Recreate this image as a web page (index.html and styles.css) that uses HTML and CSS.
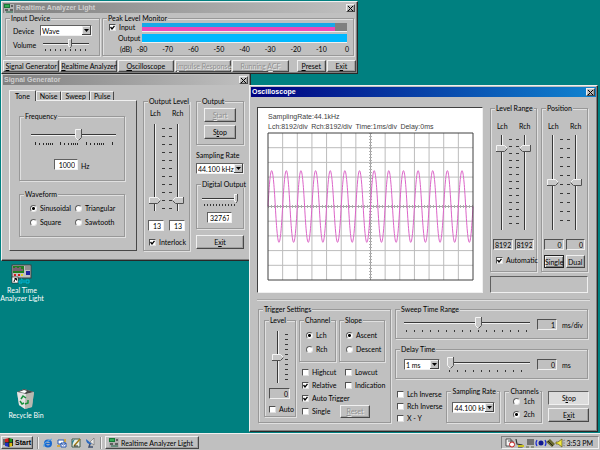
FILE: index.html
```html
<!DOCTYPE html>
<html lang="en">
<head>
<meta charset="utf-8">
<title>Realtime Analyzer Light</title>
<link rel="stylesheet" href="styles.css">
</head>
<body>
<main class="desktop">

  <a class="shortcut shortcut-app" href="#analyzer">
    <svg width="22" height="20" viewBox="0 0 22 20" aria-hidden="true">
      <rect x="1" y="1" width="19" height="13" fill="#c0c0c0" stroke="#404040"/>
      <rect x="2" y="2" width="11" height="7" fill="#208020"/>
      <path d="M3 7V4M5 7V3M7 7V4M9 7V3M11 7V5" stroke="#d040c0"/>
      <path d="M14 3h5M14 5h5" stroke="#606060"/>
      <rect x="15" y="7" width="4" height="4" fill="#2020a0"/>
      <path d="M3 11h2M7 11h2" stroke="#d02020" stroke-width="2"/><path d="M10 11h2" stroke="#e0d020" stroke-width="2"/>
      <rect x="1" y="13" width="6" height="6" fill="#fff" stroke="#222" stroke-width=".6"/>
      <path d="M3 18q0-3 2-3M3.500 14.500h2v2" fill="none" stroke="#000"/>
      <path d="M10 15h1v4h-3v-2h2M13 16v3M15 19v-3h3v3h-3" fill="none" stroke="#00b8d8"/>
    </svg>
    <span>Real Time<br>Analyzer Light</span>
  </a>
  <a class="shortcut shortcut-bin" href="#bin">
    <svg width="20" height="20" viewBox="0 0 20 20" aria-hidden="true">
      <path d="M1 3l7-3 10 3-2 15-7 2-6-4z" fill="#a8a8a8"/>
      <path d="M1 3l9 2 8-2-10-3z" fill="#484848"/>
      <path d="M1 3l9 2-1 15-6-4z" fill="#e4e4e4"/>
      <path d="M10 5l8-2-2 15-7 2z" fill="#b8b8b0"/>
      <path d="M3 3l6 1 2-2-3-1z" fill="#fff"/>
      <path d="M5 10l2-3 3 2M4 12l2 3 2-1M9 15l3-1v-3" fill="none" stroke="#189038" stroke-width="1.500"/>
    </svg>
    <span>Recycle Bin</span>
  </a>

  <section class="window analyzer" id="analyzer">
    <header class="title">
      <svg width="10" height="9" viewBox="0 0 10 9" aria-hidden="true"><rect width="10" height="9" fill="#b0b0b0"/><rect width="6" height="4" fill="#187838"/><path d="M1 6h3M6 6h3M7 2h2" stroke="#111"/><path d="M1 2h4" stroke="#50e070"/><path d="M2 8h7" stroke="#206848"/></svg>
      <h1>Realtime Analyzer Light</h1>
      <button class="close" aria-label="Close"><svg width="5" height="5" viewBox="0 0 5 5"><path d="M0 0l5 5M5 0L0 5"/></svg></button>
    </header>
    <div class="meters">
      <fieldset class="input-device">
        <legend>Input Device</legend>
        <label for="device">Device</label>
        <select id="device"><option>Wave</option></select>
        <label for="volume">Volume</label>
        <div class="slide">
          <input type="range" class="h small" id="volume" value="60">
          <i class="ticks t4"></i>
        </div>
      </fieldset>
      <fieldset class="peak">
        <legend>Peak Level Monitor</legend>
        <label class="check"><input type="checkbox" checked>Input</label>
        <div class="bar"><i class="level in" style="width:94%"></i></div>
        <span class="out-label">Output</span>
        <div class="bar"><i class="level out" style="width:100%"></i></div>
        <span class="out-label db">(dB)</span>
        <div class="scale"><span>-80</span><span>-70</span><span>-60</span><span>-50</span><span>-40</span><span>-30</span><span>-20</span><span>-10</span><span>0</span></div>
      </fieldset>
    </div>
    <nav class="tools">
      <button class="wide"><u>S</u>ignal Generator</button>
      <button class="wide"><u>R</u>ealtime Analyzer</button>
      <button class="wide"><u>O</u>scilloscope</button>
      <button class="wide" disabled><u>I</u>mpulse Response</button>
      <button class="wide" disabled>Running <u>A</u>CF</button>
      <button class="apart"><u>P</u>reset</button>
      <button>E<u>x</u>it</button>
    </nav>
  </section>

  <section class="window generator">
    <header class="title">
      <h2>Signal Generator</h2>
      <button class="close" aria-label="Close"><svg width="5" height="5" viewBox="0 0 5 5"><path d="M0 0l5 5M5 0L0 5"/></svg></button>
    </header>
    <div class="gen-body">
      <div class="tabbed">
        <div class="tabs" role="tablist">
          <button role="tab" aria-selected="true">Tone</button>
          <button role="tab">Noise</button>
          <button role="tab">Sweep</button>
          <button role="tab">Pulse</button>
        </div>
        <div class="panel" role="tabpanel">
          <fieldset class="frequency">
            <legend>Frequency</legend>
            <div class="slide">
              <input type="range" class="h" aria-label="Frequency" value="56">
              <svg class="log" width="80" height="3" viewBox="0 0 80 3" aria-hidden="true"><path d="M1.500 0v3M5.500 1v2M9.500 1v2M12.500 1v2M14.500 1v2M16.500 1v2M18.500 1v2M26.500 0v3M30.500 1v2M34.500 1v2M37.500 1v2M39.500 1v2M41.500 1v2M43.500 1v2M52.500 0v3M56.500 1v2M60.500 1v2M63.500 1v2M65.500 1v2M67.500 1v2M69.500 1v2M78.500 0v3"/></svg>
            </div>
            <div class="hertz"><input type="text" id="hz" value="1000"><label for="hz">Hz</label></div>
          </fieldset>
          <fieldset class="waveform">
            <legend>Waveform</legend>
            <label class="radio"><input type="radio" name="wave" checked>Sinusoidal</label>
            <label class="radio"><input type="radio" name="wave">Triangular</label>
            <label class="radio"><input type="radio" name="wave">Square</label>
            <label class="radio"><input type="radio" name="wave">Sawtooth</label>
          </fieldset>
        </div>
      </div>
      <fieldset class="levels output-level">
        <legend>Output Level</legend>
        <div class="heads"><label for="ol">Lch</label><label for="or">Rch</label></div>
        <div class="pair">
          <input type="range" class="v" id="ol" value="9"><i class="ticks v8"></i>
          <i class="ticks v8"></i><input type="range" class="v left" id="or" value="9">
        </div>
        <div class="values"><input type="text" aria-label="Lch level" value="13"><input type="text" aria-label="Rch level" value="13"></div>
        <label class="check"><input type="checkbox" checked>Interlock</label>
      </fieldset>
      <div class="gen-side">
        <fieldset class="output">
          <legend>Output</legend>
          <button disabled><u>S</u>tart</button>
          <button>S<u>t</u>op</button>
        </fieldset>
        <div class="rate">
          <label for="rate1">Sampling Rate</label>
          <select id="rate1"><option>44.100 kHz</option></select>
        </div>
        <fieldset class="digital">
          <legend>Digital Output</legend>
          <div class="slide">
            <input type="range" class="h small" aria-label="Digital output" value="100">
            <i class="ticks t2"></i>
          </div>
          <input type="text" aria-label="Digital output value" value="32767">
        </fieldset>
        <button class="tall">E<u>x</u>it</button>
      </div>
    </div>
  </section>

  <section class="window scope active">
    <header class="title">
      <h2>Oscilloscope</h2>
      <button class="close" aria-label="Close"><svg width="5" height="5" viewBox="0 0 5 5"><path d="M0 0l5 5M5 0L0 5"/></svg></button>
    </header>
    <div class="scope-top">
      <div class="display">
        <p>SamplingRate:44.1kHz</p>
        <p>Lch:8192/div&ensp;Rch:8192/div&ensp;Time:1ms/div&ensp;Delay:0ms</p>
        <svg class="trace" viewBox="0 0 280 200" preserveAspectRatio="none" role="img" aria-label="Waveform">
          <path class="grid" d="M20 0v200M40 0v200M60 0v200M80 0v200M100 0v200M120 0v200M160 0v200M180 0v200M200 0v200M220 0v200M240 0v200M260 0v200M0 20h280M0 40h280M0 60h280M0 80h280M0 120h280M0 140h280M0 160h280M0 180h280"/>
          <path class="axis" d="M140 0v200M0 100h280"/>
          <path class="marks-y" d="M140 0v200"/>
          <path class="marks-x" d="M0 100h280"/>
          <path class="wave" d="M0 100c3.600-65 6.400-65 10 0s6.400 65 10 0s6.400-65 10 0s6.400 65 10 0s6.400-65 10 0s6.400 65 10 0s6.400-65 10 0s6.400 65 10 0s6.400-65 10 0s6.400 65 10 0s6.400-65 10 0s6.400 65 10 0s6.400-65 10 0s6.400 65 10 0s6.400-65 10 0s6.400 65 10 0s6.400-65 10 0s6.400 65 10 0s6.400-65 10 0s6.400 65 10 0s6.400-65 10 0s6.400 65 10 0s6.400-65 10 0s6.400 65 10 0s6.400-65 10 0s6.400 65 10 0s6.400-65 10 0s6.400 65 10 0"/>
          <rect class="frame" x="0" y="0" width="280" height="200"/>
        </svg>
      </div>
      <div class="scope-side">
        <fieldset class="levels">
          <legend>Level Range</legend>
          <div class="heads"><label for="ll">Lch</label><label for="lr">Rch</label></div>
          <div class="pair">
            <input type="range" class="v" id="ll" value="89"><i class="ticks v7"></i>
            <i class="ticks v7"></i><input type="range" class="v left" id="lr" value="89">
          </div>
          <div class="values"><input type="text" class="gray" readonly aria-label="Lch range" value="8192"><input type="text" class="gray" readonly aria-label="Rch range" value="8192"></div>
          <label class="check"><input type="checkbox" checked>Automatic</label>
        </fieldset>
        <fieldset class="levels">
          <legend>Position</legend>
          <div class="heads"><label for="pl">Lch</label><label for="pr">Rch</label></div>
          <div class="pair">
            <input type="range" class="v" id="pl" value="50"><i class="ticks v9"></i>
            <i class="ticks v9"></i><input type="range" class="v left" id="pr" value="50">
          </div>
          <div class="values"><input type="text" class="gray" readonly aria-label="Lch position" value="0"><input type="text" class="gray" readonly aria-label="Rch position" value="0"></div>
          <div class="modes"><button class="chosen">Single</button><button>Dual</button></div>
        </fieldset>
        <div class="status"></div>
      </div>
    </div>
    <hr>
    <div class="scope-bottom">
      <fieldset class="trigger">
        <legend>Trigger Settings</legend>
        <fieldset class="trigger-level">
          <legend>Level</legend>
          <div class="single"><input type="range" class="v" aria-label="Trigger level" value="50"><i class="ticks v5"></i></div>
          <input type="text" class="gray" readonly aria-label="Trigger level value" value="0">
          <label class="check"><input type="checkbox">Auto</label>
        </fieldset>
        <div class="trigger-options">
          <fieldset class="choice">
            <legend>Channel</legend>
            <label class="radio"><input type="radio" name="ch" checked>Lch</label>
            <label class="radio"><input type="radio" name="ch">Rch</label>
          </fieldset>
          <fieldset class="choice">
            <legend>Slope</legend>
            <label class="radio"><input type="radio" name="slope" checked>Ascent</label>
            <label class="radio"><input type="radio" name="slope">Descent</label>
          </fieldset>
          <div class="flags">
            <label class="check"><input type="checkbox">Highcut</label>
            <label class="check"><input type="checkbox">Lowcut</label>
            <label class="check"><input type="checkbox" checked>Relative</label>
            <label class="check"><input type="checkbox">Indication</label>
            <label class="check both"><input type="checkbox" checked>Auto Trigger</label>
            <label class="check"><input type="checkbox">Single</label>
            <button disabled><u>R</u>eset</button>
          </div>
        </div>
      </fieldset>
      <div class="timing">
        <fieldset class="time">
          <legend>Sweep Time Range</legend>
          <div class="slide">
            <input type="range" class="h" aria-label="Sweep time range" value="60">
            <i class="ticks t8"></i>
          </div>
          <input type="text" class="gray" id="sweep" readonly value="1">
          <label for="sweep">ms/div</label>
        </fieldset>
        <fieldset class="time">
          <legend>Delay Time</legend>
          <select aria-label="Delay unit"><option>1 ms</option></select>
          <div class="slide">
            <input type="range" class="h" aria-label="Delay time" value="0">
            <i class="ticks t8"></i>
          </div>
          <input type="text" class="gray" id="delay" readonly value="0">
          <label for="delay">ms</label>
        </fieldset>
        <div class="finish">
          <div class="inverse">
            <label class="check"><input type="checkbox">Lch Inverse</label>
            <label class="check"><input type="checkbox">Rch Inverse</label>
            <label class="check"><input type="checkbox">X - Y</label>
          </div>
          <fieldset class="scope-rate">
            <legend>Sampling Rate</legend>
            <select aria-label="Sampling rate"><option>44.100 kHz</option></select>
          </fieldset>
          <fieldset class="channels">
            <legend>Channels</legend>
            <label class="radio"><input type="radio" name="chs">1ch</label>
            <label class="radio"><input type="radio" name="chs" checked>2ch</label>
          </fieldset>
          <div class="commands">
            <button class="pressed">S<u>t</u>op</button>
            <button>E<u>x</u>it</button>
          </div>
        </div>
      </div>
    </div>
  </section>
</main>

<footer class="taskbar">
  <button class="start">
    <svg width="10" height="9" viewBox="0 0 10 9" aria-hidden="true"><path d="M0 2h2M0 4h2M0 6h2" stroke="#111"/><path d="M2 1l4-1v4H2z" fill="#d02020"/><path d="M6 0l4 1v3H6z" fill="#189018"/><path d="M2 5h4v4L2 8z" fill="#2030c0"/><path d="M6 5h4v3l-4 1z" fill="#d8b810"/><path d="M6 0v9M2 4.500h8M9.500 1v7" stroke="#111" stroke-width=".8"/></svg>
    Start
  </button>
  <div class="quick">
    <a href="#" aria-label="Internet Explorer"><svg width="10" height="10" viewBox="0 0 10 10"><circle cx="5" cy="5.500" r="3" fill="none" stroke="#1868d0" stroke-width="2"/><path d="M3 5.500h5" stroke="#1868d0" stroke-width="1.500"/><path d="M1 9Q-1 5 9 1" fill="none" stroke="#58a8e8"/></svg></a>
    <a href="#" aria-label="Outlook Express"><svg width="10" height="10" viewBox="0 0 10 10"><path d="M1 2h6v4H1z" fill="#fff" stroke="#2858b0"/><path d="M4 5h5v4H4z" fill="#f4f4ff" stroke="#2858b0"/><path d="M4 5l2.500 2L9 5" fill="none" stroke="#2858b0"/><path d="M0 8h3M8 1v3" stroke="#d8a020" stroke-width="1.500"/></svg></a>
    <a href="#" aria-label="Show Desktop"><svg width="10" height="10" viewBox="0 0 10 10"><path d="M1 1h8v8H1z" fill="#e8f0e8" stroke="#405848"/><path d="M1 3l3-2-3 6z" fill="#308090"/><path d="M3 8l6-7" stroke="#a07818" stroke-width="1.500"/><path d="M3 8h4" stroke="#333"/></svg></a>
    <a href="#" aria-label="View Channels"><svg width="10" height="10" viewBox="0 0 10 10"><path d="M1 1q0 6 6 5z" fill="#2868c0"/><path d="M5 4l4-4v7z" fill="#e8e8e8" stroke="#555" stroke-width=".5"/><path d="M5 6l-1 3h4" fill="none" stroke="#405070" stroke-width="1.500"/></svg></a>
  </div>
  <button class="task">
    <svg width="10" height="9" viewBox="0 0 10 9" aria-hidden="true"><rect width="10" height="9" fill="#b0b0b0"/><rect width="6" height="4" fill="#187838"/><path d="M1 6h3M6 6h3M7 2h2" stroke="#111"/><path d="M1 2h4" stroke="#50e070"/><path d="M2 8h7" stroke="#206848"/></svg>
    Realtime Analyzer Light
  </button>
  <div class="tray">
    <svg width="60" height="10" viewBox="0 0 60 10" aria-hidden="true">
      <path d="M1 1h5v7H1zM3 3h5v5" fill="#f4f4f4" stroke="#333" stroke-width=".8"/><circle cx="7" cy="6.500" r="2.500" fill="#fff" stroke="#c82020"/>
      <path d="M11 1l1 5 5 1v2h-4" fill="none" stroke="#333" stroke-width="1.200"/><path d="M13 8h6" stroke="#c8c020" stroke-width="2"/>
      <rect x="22" y="1" width="7" height="6" fill="#707070"/><path d="M21 9h3M26 9h3" stroke="#606848"/>
      <circle cx="36" cy="5" r="2.500" fill="#101890"/><path d="M32 2q-2 3 0 6M40 2q2 3 0 6" fill="none" stroke="#2030d8" stroke-width="1.200"/>
      <path d="M41 4l4-3 5 5-3 3z" fill="#686830"/><path d="M43 3l5 5" stroke="#282818"/>
      <path d="M51 4h2l4-3v8l-4-3h-2z" fill="#f0e840" stroke="#605818" stroke-width=".7"/><path d="M58 3l2-1M58 5h2M58 7l2 1" stroke="#666" stroke-width=".6"/>
    </svg>
    <time>3:53 PM</time>
  </div>
</footer>
</body>
</html>
```
FILE: styles.css
```css
:root {
  --face: #c0c0c0;
  --light: #f0f0f0;
  --shade: #808080;
  --edge: #989898;
  --text: 7px/8px Lato, "Liberation Sans", sans-serif;
}

* { box-sizing: border-box; }

body {
  margin: 0;
  min-height: 100vh;
  display: flex;
  flex-direction: column;
  background: #008080;
  color: #000;
  font: var(--text);
  white-space: nowrap;
}

.desktop { flex: 1; position: relative; }

h1, h2, p { margin: 0; font: inherit; }
i { display: block; }

/* Shortcuts on the desktop */
.shortcut {
  position: absolute;
  display: flex;
  flex-direction: column;
  align-items: center;
  gap: 2px;
  color: #fff;
  text-align: center;
  text-decoration: none;
}
.shortcut-app { left: 1px; top: 264px; width: 42px; }
.shortcut-bin { left: 8px; top: 389px; width: 36px; }

/* Windows */
.window {
  position: absolute;
  padding: 1px;
  background: var(--face);
  border: 1px solid;
  border-color: var(--light) #282828 #282828 var(--light);
  box-shadow: inset -1px -1px 0 var(--shade);
}
.analyzer { left: 1px; top: 1px; width: 357px; z-index: 2; }
.generator { left: 1px; top: 73px; width: 250px; z-index: 1; }
.scope { left: 249px; top: 85px; width: 349px; z-index: 3; }

.title {
  display: flex;
  align-items: center;
  gap: 2px;
  height: 10px;
  padding: 0 1px;
  background: linear-gradient(90deg, #808080, #c0c0c0);
  color: #d0d0d0;
}
.title h1, .title h2 { flex: 1; font: bold 7px/8px "Liberation Sans", sans-serif; }
.active .title { background: linear-gradient(90deg, #000080, #1084d0); color: #fff; }

/* Controls */
button {
  min-width: 0;
  height: 12px;
  padding: 0;
  display: flex;
  align-items: center;
  justify-content: center;
  background: var(--face);
  border: 1px solid;
  border-color: var(--light) #484848 #484848 var(--light);
  box-shadow: inset -1px -1px 0 #a0a0a0;
  color: inherit;
  font: var(--text);
  white-space: nowrap;
}
.tools button, .output button, .tall, .modes button, .flags button, .commands button { display: block; text-align: center; }
button:disabled { color: #909090; text-shadow: 1px 1px 0 #e8e8e8; }
.close { width: 9px; height: 8px; }
.close svg { fill: none; stroke: #000; }

input, select { margin: 0; min-width: 0; color: inherit; font: var(--text); }

input[type="text"], select {
  height: 11px;
  padding: 0 2px;
  background-color: #fff;
  border: 1px solid;
  border-color: #606060 var(--light) var(--light) #606060;
  border-radius: 0;
}
input[type="text"] { width: 100%; text-align: right; }
input[type="text"].gray { padding: 0 1px; background-color: var(--face); border-color: #505050 var(--light) var(--light) #505050; }

select {
  appearance: none;
  padding: 0 9px 0 1px;
  background-image: url("data:image/svg+xml,%3Csvg xmlns='http://www.w3.org/2000/svg' width='9' height='9'%3E%3Cpath d='M0 0h9v9H0z' fill='%23404040'/%3E%3Cpath d='M0 0h8v8H0z' fill='%23eee'/%3E%3Cpath d='M1 1h7v7H1z' fill='%23c0c0c0'/%3E%3Cpath d='M2 3h5L4.500 6z'/%3E%3C/svg%3E");
  background-repeat: no-repeat;
  background-position: right center;
}

.check, .radio { display: flex; align-items: center; gap: 3px; height: 8px; }
.check input {
  appearance: none;
  flex: none;
  width: 7px;
  height: 7px;
  background: #fff;
  border: 1px solid;
  border-color: #505050 #e0e0e0 #e0e0e0 #505050;
}
.check input:checked {
  background: #fff url("data:image/svg+xml,%3Csvg xmlns='http://www.w3.org/2000/svg' width='5' height='5'%3E%3Cpath d='M.5 2l1.500 2L4.500.8' fill='none' stroke='%23000' stroke-width='1.300'/%3E%3C/svg%3E") no-repeat;
}
.radio input {
  appearance: none;
  flex: none;
  width: 7px;
  height: 7px;
  background: #fff;
  border: 1px solid;
  border-color: #606060 #e8e8e8 #e8e8e8 #606060;
  border-radius: 50%;
}
.radio input:checked { background: radial-gradient(circle, #000 0 1px, #fff 2px); }

/* Sliders */
input[type="range"] { appearance: none; display: block; background: none; }
.h { width: 100%; height: 12px; }
.h.small { height: 9px; }
.h::-webkit-slider-runnable-track {
  height: 2px;
  background: #383838;
  border-bottom: 1px solid var(--light);
}
.h::-webkit-slider-thumb {
  appearance: none;
  width: 7px;
  height: 12px;
  margin-top: -5px;
  background: url("data:image/svg+xml,%3Csvg xmlns='http://www.w3.org/2000/svg' width='7' height='12'%3E%3Cpath d='M.5.5h6v8l-3 3-3-3z' fill='%23c8c8c8' stroke='%23f4f4f4'/%3E%3Cpath d='M6.500 0v8.500l-3 3' fill='none' stroke='%23505050'/%3E%3C/svg%3E");
}
.h.small::-webkit-slider-thumb {
  width: 4px;
  height: 9px;
  margin-top: -4px;
  background: url("data:image/svg+xml,%3Csvg xmlns='http://www.w3.org/2000/svg' width='4' height='9'%3E%3Cpath d='M0 0h4v7L2 9 0 7z' fill='%23f4f4f4'/%3E%3Cpath d='M1 1h2v6H1z' fill='%23c8c8c8'/%3E%3Cpath d='M3.500 0v7l-1.500 2' fill='none' stroke='%23505050'/%3E%3C/svg%3E");
}
.v { writing-mode: vertical-lr; direction: rtl; width: 13px; height: 100%; }
.v::-webkit-slider-runnable-track {
  width: 2px;
  background: #383838;
  border-right: 1px solid var(--light);
}
.v::-webkit-slider-thumb {
  appearance: none;
  width: 12px;
  height: 7px;
  margin-left: -5px;
  background: url("data:image/svg+xml,%3Csvg xmlns='http://www.w3.org/2000/svg' width='12' height='7'%3E%3Cpath d='M.5.5h8l3 3-3 3h-8z' fill='%23c8c8c8' stroke='%23f4f4f4'/%3E%3Cpath d='M0 6.500h8.500l3-3' fill='none' stroke='%23505050'/%3E%3C/svg%3E");
}
.v.left::-webkit-slider-thumb {
  background: url("data:image/svg+xml,%3Csvg xmlns='http://www.w3.org/2000/svg' width='12' height='7'%3E%3Cpath d='M11.500.5h-8l-3 3 3 3h8z' fill='%23c8c8c8' stroke='%23f4f4f4'/%3E%3Cpath d='M.5 3.500l3 3h8V0' fill='none' stroke='%23505050'/%3E%3C/svg%3E");
}

.slide { display: flex; flex-direction: column; gap: 1px; min-width: 0; }
.slide .ticks { height: 2px; margin: 0 2px; }
.t2 { background: repeating-linear-gradient(90deg, #383838 0 1px, transparent 1px 3px); }
.t4 { background: repeating-linear-gradient(90deg, #383838 0 1px, transparent 1px 5px); }
.t8 { background: repeating-linear-gradient(90deg, #383838 0 1px, transparent 1px 8px); }
.v5 { background: repeating-linear-gradient(#383838 0 1px, transparent 1px 5px); }
.v7 { background: repeating-linear-gradient(#383838 0 1px, transparent 1px 7px); }
.v8 { background: repeating-linear-gradient(#383838 0 1px, transparent 1px 8px); }
.v9 { background: repeating-linear-gradient(#383838 0 1px, transparent 1px 9px); }
.log { margin-left: 3px; stroke: #282828; }

/* Group boxes: --inset is the left padding; the legend keeps its own distance */
fieldset {
  --inset: 0px;
  min-width: 0;
  margin: 0;
  padding: 0 0 0 var(--inset);
  border: 1px solid var(--edge);
  box-shadow: 1px 1px 0 #e0e0e0, inset 1px 1px 0 #e0e0e0;
}
legend {
  height: 8px;
  margin-left: calc(4px - var(--inset));
  padding: 0 1px;
  background: var(--face);
}

/* Realtime Analyzer Light */
.meters { display: flex; gap: 2px; padding: 1px 2px 0; }
.input-device {
  --inset: 7px;
  flex: 0 0 95px;
  display: grid;
  grid-template-columns: 27px 1fr;
  gap: 3px 0;
  align-content: start;
  padding: 3px 7px;
}
.input-device label { align-self: center; }
.input-device .slide { padding: 0 3px; }
.peak {
  --inset: 6px;
  flex: 1;
  display: grid;
  grid-template-columns: 33px 1fr;
  gap: 3px 0;
  align-content: start;
  padding: 1px 6px 2px;
}
.bar { height: 8px; background: #808080; box-shadow: 0 1px 0 var(--light); }
.level { height: 100%; }
.in { background: linear-gradient(#18a8e8 0 4px, #f048b8 4px); }
.out { background: #00b8ff; }
.out-label { padding-left: 9px; }
.db { padding-left: 11px; }
.scale { display: flex; justify-content: space-between; }
.scale span { width: 0; display: flex; justify-content: center; }
.tools { display: flex; gap: 1px; padding: 4px 0 0; }
.tools button { flex: 1 1 0; }
.tools .wide { flex-grow: 2; }
.tools .apart { margin-left: 7px; }

/* Signal Generator */
.gen-body { display: flex; gap: 6px; padding: 5px 5px 8px 6px; }
.tabbed { flex: 1; min-width: 0; display: flex; flex-direction: column; }
.tabs { display: flex; align-items: flex-end; height: 10px; }
.tabs button {
  height: 9px;
  padding: 0 3px;
  border-bottom: 0;
  border-radius: 1px 1px 0 0;
  box-shadow: none;
}
.tabs [aria-selected] { height: 11px; padding: 0 5px; margin-bottom: -1px; position: relative; }
.panel {
  flex: 1;
  display: flex;
  flex-direction: column;
  gap: 9px;
  padding: 11px 11px 13px 9px;
  border: 1px solid;
  border-color: var(--light) #484848 #484848 var(--light);
}
.frequency { --inset: 11px; padding: 9px 8px 10px 11px; }
.hertz { display: flex; align-items: end; gap: 3px; margin-top: 14px; padding-left: 23px; }
.hertz input { width: 24px; }
.waveform {
  --inset: 10px;
  display: grid;
  grid-template-columns: 45px 1fr;
  gap: 6px 0;
  padding: 6px 0 10px 10px;
}
.levels { display: flex; flex-direction: column; flex: 0 0 47px; }
.heads { display: grid; grid-template-columns: 1fr 1fr; text-align: center; }
.pair { display: grid; grid-template-columns: 13px 3px 7px 13px; justify-content: center; }
.pair .ticks { width: 3px; margin: 4px 0 2px; justify-self: end; }
.values { display: flex; gap: 2px; padding: 0 2px; }
.levels .check { padding-left: 5px; }
.output-level { margin-top: 7px; padding-top: 4px; }
.output-level .pair { height: 87px; margin: 7px 0 9px; }
.output-level .values { padding: 0 4px; gap: 5px; }
.output-level .check { margin-top: 7px; }
.gen-side { flex: 0 0 48px; min-width: 0; display: flex; flex-direction: column; gap: 6px; margin-top: 7px; }
.output { --inset: 7px; display: flex; flex-direction: column; gap: 3px; padding: 3px 7px 5px; }
.output button, .tall { height: 14px; }
.rate { display: flex; flex-direction: column; gap: 4px; }
.digital { --inset: 5px; display: flex; flex-direction: column; gap: 6px; padding: 6px 5px 5px; }
.digital input[type="text"] { width: 25px; margin-left: 5px; }

/* Oscilloscope */
.scope-top { display: flex; gap: 7px; padding: 7px 8px 6px 6px; }
.display {
  flex: 1;
  margin-top: 3px;
  padding: 4px 9px 12px 10px;
  background: #fff;
  border: 1px solid;
  border-color: #404040 var(--light) var(--light) #404040;
  color: #404040;
  font: 7px/10px "Liberation Sans", sans-serif;
}
.trace { display: block; width: 100%; height: 147px; margin-top: 1px; overflow: visible; }
.trace * { fill: none; vector-effect: non-scaling-stroke; }
.grid { stroke: #bcbcbc; }
.axis { stroke: #a0a0a0; }
.marks-y, .marks-x { stroke: #b0b0b0; stroke-width: 3px; stroke-dasharray: 1px 2px; }
.frame { stroke: #404040; }
.wave { stroke: #dc64c8; }

.scope-side {
  flex: 0 0 98px;
  display: grid;
  grid-template-columns: 1fr 1fr;
  gap: 4px;
}
.scope-side .levels { padding: 10px 0 2px; }
.scope-side .pair { height: 95px; margin: 5px 0 9px; }
.scope-side .check { margin-top: 6px; }
.modes { display: flex; gap: 2px; padding: 0 2px; margin-top: 5px; }
.modes button { flex: 1; height: 13px; }
.modes .chosen { border-color: #202020; box-shadow: inset 1px 1px 0 var(--light), inset -1px -1px 0 var(--shade); }
.status {
  grid-column: 1 / -1;
  height: 17px;
  border: 1px solid;
  border-color: #606060 var(--light) var(--light) #606060;
}
hr {
  height: 1px;
  margin: 0 6px;
  border: 0;
  background: #a8a8a8;
  box-shadow: 0 1px 0 #e0e0e0;
}
.scope-bottom { display: flex; gap: 4px; padding: 5px 8px 7px 7px; }
.trigger { --inset: 5px; flex: 0 0 133px; display: flex; gap: 3px; padding: 3px 5px 5px; }
.trigger-level { --inset: 4px; flex: 0 0 32px; display: flex; flex-direction: column; padding: 7px 0 3px 4px; }
.single { display: flex; gap: 1px; height: 52px; padding-left: 2px; margin-bottom: 5px; }
.single .ticks { width: 3px; margin: 3px 0; }
.trigger-level input[type="text"] { width: 21px; }
.trigger-level .check { margin-top: 6px; }
.trigger-options { flex: 1; display: grid; grid-template-columns: 37px 1fr; gap: 6px 3px; align-content: start; }
.choice { --inset: 6px; display: flex; flex-direction: column; gap: 6px; padding: 7px 0 8px 6px; }
.flags {
  grid-column: 1 / -1;
  display: grid;
  grid-template-columns: 43px 1fr;
  grid-auto-rows: 8px;
  gap: 5px 0;
  align-items: center;
  padding-left: 3px;
}
.both { grid-column: 1 / -1; }
.flags button { width: 30px; height: 13px; margin-left: -5px; }

.timing { flex: 1; display: flex; flex-direction: column; gap: 6px; min-width: 0; }
.time { --inset: 8px; display: flex; align-items: center; gap: 5px; padding: 4px 6px 6px 8px; }
.time .slide { flex: 1; }
.time .slide + input { width: 20px; margin-left: 2px; }
.time select { width: 36px; margin-right: 2px; }
.time label { width: 19px; }
.finish { flex: 1; display: flex; gap: 4px; padding-top: 2px; }
.inverse { flex: 1; display: flex; flex-direction: column; gap: 4px; padding: 3px 0 0 2px; }
.scope-rate { --inset: 5px; flex: 0 0 54px; padding: 7px 5px; }
.scope-rate select { display: block; width: 43px; }
.channels { --inset: 8px; flex: 0 0 38px; display: flex; flex-direction: column; gap: 5px; padding: 2px 0 4px 8px; }
.commands { flex: 0 0 41px; display: flex; flex-direction: column; gap: 3px; padding-top: 4px; margin-left: 2px; }
.commands button { height: 14px; }
.commands .pressed { background: #dcdcdc; border-color: #606060 var(--light) var(--light) #606060; box-shadow: none; }

/* Taskbar */
.taskbar {
  display: flex;
  align-items: center;
  height: 17px;
  padding: 1px 1px 0;
  background: var(--face);
  border-top: 1px solid var(--light);
}
.taskbar button { height: 13px; gap: 2px; }
.taskbar .start { width: 32px; font: bold 7px/8px "Liberation Sans", sans-serif; }
.quick {
  display: flex;
  align-items: center;
  gap: 4px;
  height: 12px;
  margin: 0 4px;
  padding: 0 5px;
  border: solid #909090;
  border-width: 0 1px;
  box-shadow: 1px 0 0 var(--light), inset 1px 0 0 var(--light);
}
.quick a, .quick svg { display: block; }
.taskbar .task { width: 94px; padding-left: 3px; justify-content: flex-start; }
.tray {
  display: flex;
  align-items: center;
  justify-content: space-between;
  width: 98px;
  height: 13px;
  margin-left: auto;
  padding: 0 5px 0 3px;
  border: 1px solid;
  border-color: var(--shade) var(--light) var(--light) var(--shade);
}
```
